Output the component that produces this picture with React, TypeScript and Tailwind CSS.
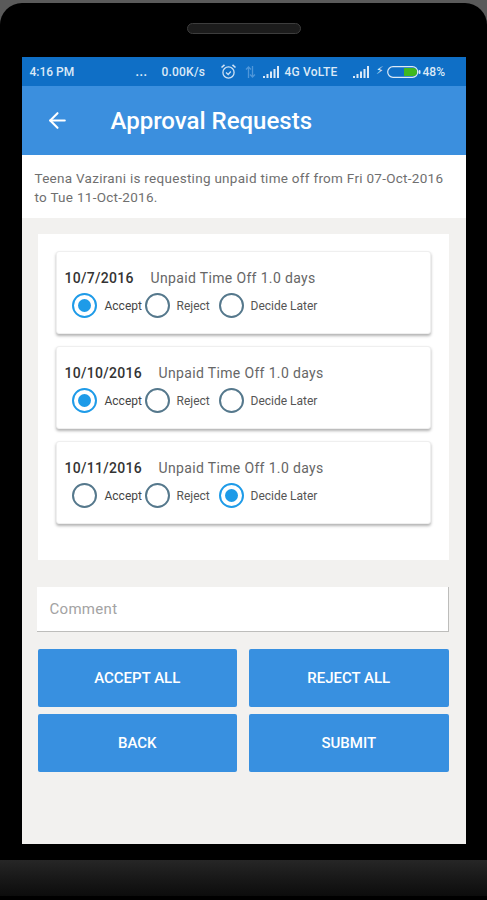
import React from 'react';
import { ArrowLeft } from 'lucide-react';

const font = { fontFamily: 'Roboto, sans-serif' };

const Signal = () => (
  <svg width="18" height="14" viewBox="0 0 18 14" className="shrink-0">
    <rect x="0" y="11" width="2" height="2" fill="#dbe9f7" />
    <rect x="3.5" y="9" width="2" height="4" fill="#dbe9f7" />
    <rect x="7" y="6.5" width="2" height="6.5" fill="#dbe9f7" />
    <rect x="10.5" y="4" width="2" height="9" fill="#dbe9f7" />
    <rect x="14" y="1" width="2" height="12" fill="#dbe9f7" />
  </svg>
);

const Alarm = () => (
  <svg width="17" height="17" viewBox="0 0 17 17" fill="none" stroke="#cfe2f5" strokeWidth="1.3" className="shrink-0">
    <circle cx="8.5" cy="9.5" r="5.6" />
    <path d="M6 9.5l2.2 2 2.6-3" />
    <path d="M1.5 4.5L4.5 1.8M15.5 4.5L12.5 1.8" strokeWidth="1.6" />
  </svg>
);

const Arrows = () => (
  <svg width="11" height="14" viewBox="0 0 11 14" fill="none" stroke="#4f97da" strokeWidth="1.3" className="shrink-0">
    <path d="M3.5 13V2M1 4.5L3.5 2 6 4.5" />
    <path d="M7.5 1v11M5 9.5L7.5 12 10 9.5" />
  </svg>
);

const Battery = () => (
  <svg width="34" height="14" viewBox="0 0 34 14" className="shrink-0">
    <rect x="0.7" y="1.7" width="30" height="10.6" rx="5.3" fill="none" stroke="#dbe9f7" strokeWidth="1.2" />
    <path d="M17 3h9a4 4 0 0 1 0 8h-9z" fill="#3fb81f" />
    <rect x="31.5" y="5" width="2" height="4" rx="1" fill="#dbe9f7" />
  </svg>
);

const Radio = ({ on }: { on: boolean }) =>
  on ? (
    <span className="w-[25px] h-[25px] shrink-0 rounded-full border-2 border-[#1e9be8] flex items-center justify-center">
      <span className="w-[13px] h-[13px] rounded-full bg-[#1e9be8]" />
    </span>
  ) : (
    <span className="w-[25px] h-[25px] shrink-0 rounded-full border-2 border-[#55788c]" />
  );

const requests = [
  { date: '10/7/2016', pick: 0, gap: 'w-[86px]' },
  { date: '10/10/2016', pick: 0, gap: 'w-[94px]' },
  { date: '10/11/2016', pick: 2, gap: 'w-[94px]' },
];

const RequestCard = ({ date, pick, gap }: { date: string; pick: number; gap: string }) => (
  <div className="h-[83px] rounded-[3px] bg-white border border-[#efefef] shadow-[0_2px_3px_rgba(0,0,0,0.3)] pl-[8px] pt-[17px]">
    <div className="flex items-center h-[18px] text-[14px]">
      <span className={`${gap} font-medium text-[#333] tracking-[0.3px]`}>{date}</span>
      <span className="text-[#666] tracking-[0.35px]">Unpaid Time Off 1.0 days</span>
    </div>
    <div className="flex items-center mt-[6px] pl-[7px] text-[12px] text-[#444]">
      <Radio on={pick === 0} />
      <span className="ml-[8px] w-[40px]">Accept</span>
      <Radio on={pick === 1} />
      <span className="ml-[7px] w-[42px] text-[#555]">Reject</span>
      <Radio on={pick === 2} />
      <span className="ml-[7px] text-[#555]">Decide Later</span>
    </div>
  </div>
);

const ActionButton = ({ label }: { label: string }) => (
  <button className="h-[58px] rounded-[2px] bg-[#3890e0] text-white text-[15px] font-medium">{label}</button>
);

export default function App() {
  return (
    <div className="w-[487px] h-[900px] overflow-hidden bg-[#5a5a5a] relative" style={font}>
      <div className="h-[900px] mt-[3px] rounded-t-[22px] bg-black flex flex-col items-center">
        <div className="w-[114px] h-[11px] mt-[20px] shrink-0 rounded-full bg-[#1c1c1c] border border-[#3d3d3d]" />

        <div className="w-[444px] h-[787px] mt-[23px] shrink-0 bg-[#f2f1ef] flex flex-col">
          {/* status bar */}
          <div className="h-[29px] shrink-0 bg-[#0f6fc6] flex items-center pl-[8px] text-[12px] font-medium text-[#dbe9f7]">
            <span className="w-[106px]">4:16 PM</span>
            <span className="w-[26px] font-bold tracking-[0.5px]">...</span>
            <span className="w-[58px] tracking-[0.2px]">0.00K/s</span>
            <Alarm />
            <span className="w-[8px]" />
            <Arrows />
            <span className="w-[7px]" />
            <Signal />
            <span className="ml-[4px] w-[68px] tracking-[0.2px]">4G VoLTE</span>
            <Signal />
            <span className="ml-[5px] text-[11px] w-[11px]">⚡︎</span>
            <Battery />
            <span className="ml-[2px] text-[12px]">48%</span>
          </div>

          {/* toolbar */}
          <div className="h-[69px] shrink-0 bg-[#3b8fde] flex items-center text-white">
            <ArrowLeft size={25} strokeWidth={2} className="ml-[23px]" />
            <span className="ml-[41px] text-[24px] font-medium">Approval Requests</span>
          </div>

          <div className="h-[63px] shrink-0 bg-white pl-[13px] pt-[14px] text-[13.5px] leading-[19px] text-[#6f6f6f] tracking-[0.28px]">
            Teena Vazirani is requesting unpaid time off from Fri 07-Oct-2016
            <br />
            to Tue 11-Oct-2016.
          </div>

          <div className="flex-1 flex flex-col pl-[16px] pr-[17px] pt-[16px]">
            <div className="h-[326px] bg-white px-[18px] pt-[17px] flex flex-col gap-[12px]">
              {requests.map(r => (
                <RequestCard key={r.date} date={r.date} pick={r.pick} gap={r.gap} />
              ))}
            </div>

            <div className="h-[45px] mt-[27px] -ml-[1px] bg-white border-b border-r border-[#bdbdbb] flex items-center pl-[13px] text-[15px] text-[#a3a3a3] tracking-[0.3px]">
              Comment
            </div>

            <div className="grid grid-cols-2 gap-x-[12px] gap-y-[7px] mt-[17px]">
              <ActionButton label="ACCEPT ALL" />
              <ActionButton label="REJECT ALL" />
              <ActionButton label="BACK" />
              <ActionButton label="SUBMIT" />
            </div>
          </div>
        </div>

        <div className="w-full h-[36px] mt-[16px] shrink-0 bg-gradient-to-b from-[#262626] to-[#0c0c0c]" />
      </div>
    </div>
  );
}
